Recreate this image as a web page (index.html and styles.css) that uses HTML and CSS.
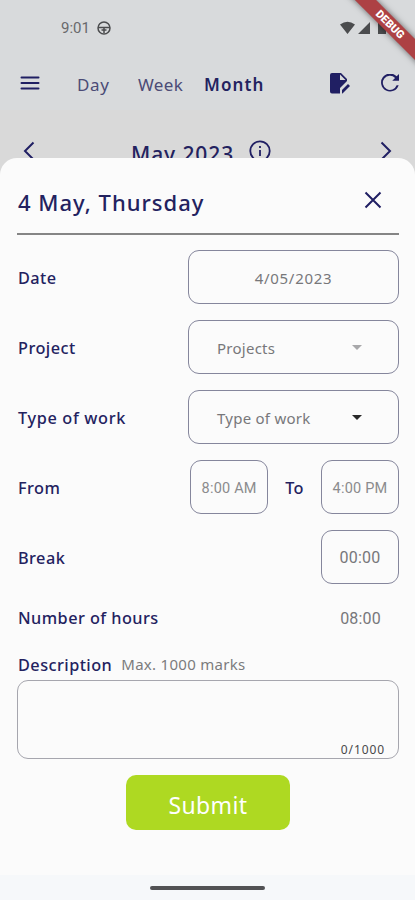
FILE: index.html
```html
<!DOCTYPE html>
<html lang="en">
<head>
<meta charset="utf-8">
<meta name="viewport" content="width=device-width, initial-scale=1">
<title>Timesheet entry</title>
<link rel="stylesheet" href="styles.css">
</head>
<body>
<div class="screen">
  <header class="backdrop">
    <div class="status">
      <span class="clock">9:01</span>
      <svg class="status-app" viewBox="0 0 14 14" width="14" height="14"><circle cx="7" cy="7" r="6"/><path d="M1 6.500h12M4.500 9h5M7 7v5"/></svg>
      <svg class="status-signals" viewBox="0 0 46 14" width="46" height="14"><path d="M0 3.500Q7.500-2 15 3.500L7.500 13zM30 1v12H18zM38 2h2V0h4v2h2v11h-8z"/></svg>
    </div>
    <nav class="nav">
      <svg class="menu" viewBox="0 0 20 14" width="20" height="14"><path d="M1.500 1.500h17M1.500 7h17M1.500 12.500h17"/></svg>
      <span class="tab day">Day</span>
      <span class="tab week">Week</span>
      <span class="tab month">Month</span>
      <svg class="edit" viewBox="0 0 20 21" width="20" height="21"><path fill-rule="evenodd" d="M2 0h9l6 6v2l-7 7v5.500H2Q0 20.500 0 18.500V2Q0 0 2 0zM10 1.500V7h5.500z"/><path d="M12 17l6-6 2 2-7.500 7.500H12z"/></svg>
      <svg class="refresh" viewBox="4 4 16 16" width="18" height="18"><path d="M17.900 6.100A8 8 0 1 0 19.700 14h-1.800A6.300 6.300 0 1 1 16.500 7.500L14 10h6V4z"/></svg>
    </nav>
    <div class="period">
      <svg class="prev" viewBox="0 0 12 20" width="12" height="20"><path d="M10.500 1.500L2 10l8.500 8.500"/></svg>
      <span class="period-name">May 2023</span>
      <svg class="info" viewBox="0 0 22 22" width="22" height="22"><circle cx="11" cy="11" r="9.700"/><path d="M11 10v6M11 6v2"/></svg>
      <svg class="next" viewBox="0 0 12 20" width="12" height="20"><path d="M1.500 1.500L10 10l-8.500 8.500"/></svg>
    </div>
  </header>
  <div class="ribbon">DEBUG</div>

  <main class="sheet">
    <div class="sheet-head">
      <h1>4 May, Thursday</h1>
      <svg class="close" viewBox="0 0 18 18" width="18" height="18"><path d="M1.500 1.500l15 15M16.500 1.500l-15 15"/></svg>
    </div>
    <div class="row"><span class="label">Date</span><div class="field wide date"><span>4/05/2023</span></div></div>
    <div class="row"><span class="label">Project</span><div class="field wide select"><span>Projects</span><i class="caret muted"></i></div></div>
    <div class="row"><span class="label type">Type of work</span><div class="field wide select"><span>Type of work</span><i class="caret"></i></div></div>
    <div class="row"><span class="label">From</span><div class="field small time"><span>8:00 AM</span></div><span class="label to">To</span><div class="field small time"><span>4:00 PM</span></div></div>
    <div class="row"><span class="label">Break</span><div class="field small digits"><span>00:00</span></div></div>
    <div class="hours"><span class="label">Number of hours</span><span class="digits">08:00</span></div>
    <div class="description"><span class="label">Description</span><span class="hint">Max. 1000 marks</span></div>
    <div class="notes"><span>0/1000</span></div>
    <button class="submit"><span>Submit</span></button>
    <footer class="gesture"><i></i></footer>
  </main>
</div>
</body>
</html>
```
FILE: styles.css
```css
* { box-sizing: border-box; }
body { margin: 0; font-family: "Noto Sans", sans-serif; color: #23225f; }
svg { display: block; flex: none; }
.screen { position: relative; width: 415px; height: 900px; overflow: hidden; background: #d9d9d9; }
.backdrop { height: 158px; overflow: hidden; background: linear-gradient(#d8dadc 0 110px, #d9d9d9 110px); }
.status { display: flex; align-items: center; height: 56px; padding: 0 29px 0 61px; }
.clock { width: 36px; font: 15px Roboto, sans-serif; color: #68696c; }
.status-app { fill: none; stroke: #4b4c4e; stroke-width: 1.5; }
.status-signals { margin-left: auto; fill: #4b4c4e; }
.nav { display: flex; align-items: center; height: 54px; padding: 0 16px 0 20px; }
.menu, .prev, .next, .info, .close { fill: none; stroke: #201f63; stroke-width: 2; }
.menu { stroke-linecap: round; }
.edit, .refresh { fill: #201f63; }
.tab { padding-top: 2px; font-size: 17px; color: #4b4b76; white-space: nowrap; }
.day { width: 61px; margin-left: 37px; letter-spacing: .6px; }
.week { width: 66px; letter-spacing: .4px; }
.month { font-weight: 600; color: #23225f; letter-spacing: 1.1px; }
.edit { margin-left: auto; }
.refresh { margin-left: 31px; }
.period { display: flex; align-items: flex-start; padding: 30px 23px 0; }
.period-name { margin: 0 15px 0 96px; font-size: 21px; line-height: 29px; font-weight: 500; letter-spacing: .9px; white-space: nowrap; }
.info { stroke-width: 1.8; }
.prev, .next { margin-top: 1px; }
.next { margin-left: auto; }
.ribbon { position: absolute; top: 17px; right: -35px; width: 120px; height: 15px; background: #ad4144; color: #fff; font: 900 11px/15px Roboto, sans-serif; text-align: center; transform: rotate(45deg); box-shadow: 0 0 6px rgba(0,0,0,.55); }
.sheet { height: 742px; padding: 0 16px 0 17px; border-radius: 17px 17px 0 0; background: #fbfbfb; }
.sheet-head { display: flex; align-items: center; justify-content: space-between; height: 77px; margin-bottom: 15px; padding: 9px 17px 0 1px; border-bottom: 2px solid #858585; }
h1 { margin: 0; padding-top: 3px; font-size: 22px; font-weight: 500; letter-spacing: 1px; white-space: nowrap; }
.row { display: flex; align-items: center; height: 54px; margin-bottom: 16px; padding-left: 1px; }
.label { padding-top: 2px; font-size: 16.3px; font-weight: 500; letter-spacing: .45px; white-space: nowrap; }
.type { letter-spacing: .65px; }
.field { display: flex; align-items: center; justify-content: center; height: 54px; margin-left: auto; border: 1px solid #85869c; border-radius: 11px; color: #77777a; white-space: nowrap; }
.wide { width: 211px; font-size: 15px; letter-spacing: .7px; }
.wide span { padding-top: 2px; }
.small { width: 78px; }
.select { justify-content: space-between; padding: 0 36px 0 28px; letter-spacing: .25px; }
.caret { border: 5px solid transparent; border-top-color: #292929; border-bottom: 0; }
.caret.muted { border-top-color: #a8a8aa; }
.time { padding-top: 2px; font: 14.5px Roboto, sans-serif; color: #8b8b8d; letter-spacing: .2px; }
.to { margin-left: 17px; }
.to + .field { margin-left: 17px; }
.digits { font: 16px Roboto, sans-serif; color: #77777a; letter-spacing: .2px; }
.hours { display: flex; align-items: center; justify-content: space-between; height: 36px; padding: 0 18px 0 1px; }
.hours .label { padding-top: 0; }
.description { display: flex; align-items: center; height: 44px; padding: 11px 1px 0; }
.hint { margin-left: 9px; padding-top: 1px; font-size: 15px; letter-spacing: .28px; color: #7b7b7d; white-space: nowrap; }
.notes { display: flex; align-items: flex-end; justify-content: flex-end; height: 79px; padding: 0 13px 0 0; border: 1.500px solid #a6a6ae; border-radius: 11px; font-size: 12px; line-height: 16px; letter-spacing: .9px; color: #48484a; }
.submit { display: flex; align-items: center; justify-content: center; width: 164px; height: 55px; margin: 16px auto 0; border: 0; border-radius: 10px; background: #aed922; color: #fff; font: 400 23px "Noto Sans", sans-serif; letter-spacing: .4px; padding: 5px 0 0; }
.gesture { display: flex; justify-content: center; height: 25px; margin: 45px -16px 0 -17px; padding-top: 11px; background: #f6f8fa; }
.gesture i { width: 115px; height: 4px; border-radius: 2px; background: #525254; }
```
